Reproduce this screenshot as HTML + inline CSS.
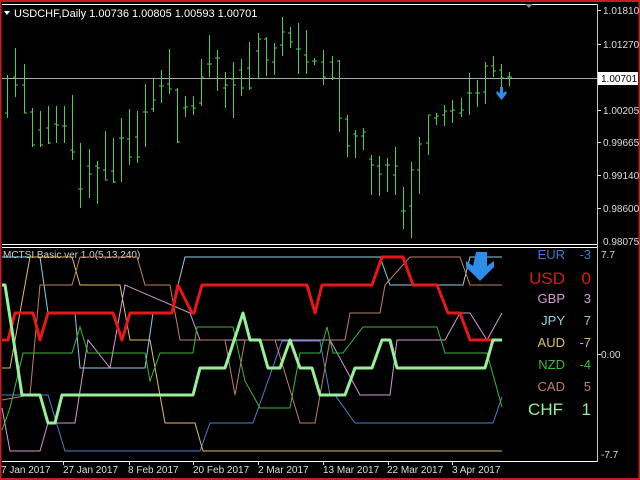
<!DOCTYPE html>
<html><head><meta charset="utf-8"><style>
html,body{margin:0;padding:0;background:#000;}
svg{display:block;}
text{font-family:"Liberation Sans",sans-serif;}
</style></head><body>
<svg width="640" height="480" viewBox="0 0 640 480" xmlns="http://www.w3.org/2000/svg">
<rect width="640" height="480" fill="#000"/>
<rect x="0.5" y="1" width="639" height="478" fill="none" stroke="#c02020" stroke-width="2"/>
<line x1="2" y1="4.5" x2="597" y2="4.5" stroke="#fff"/>
<line x1="2" y1="244.5" x2="597" y2="244.5" stroke="#fff"/>
<line x1="2" y1="247.5" x2="597" y2="247.5" stroke="#fff"/>
<line x1="2" y1="461.5" x2="597" y2="461.5" stroke="#fff"/>
<line x1="597.5" y1="4" x2="597.5" y2="462" stroke="#c8c8c8"/>
<line x1="2" y1="78.5" x2="597" y2="78.5" stroke="#a8a8a8"/>
<path d="M4 11 L10 11 L7 15 Z" fill="#fff"/>
<text x="14" y="17" font-size="11" fill="#fff">USDCHF,Daily  1.00736 1.00805 1.00593 1.00701</text>
<path d="M525 4 L533 4 L529 8 Z" fill="#888"/>
<g stroke="#4ed04e" stroke-width="1" fill="none">
<path d="M7.5 75V118M5 113h3M15.5 48V97M13 77h3M15 85h3M24.5 64V113M22 85h3M24 113h3M32.5 108V147M30 112h3M32 145h3M40.5 111V147M38 130h3M40 145h3M48.5 106V144M46 128h3M48 143h3M56.5 106V143M54 124h3M56 125h3M64.5 106V143M62 126h3M64 126h3M72.5 95V160M70 150h3M72 152h3M80.5 143V208M78 189h3M80 189h3M89.5 149V198M87 166h3M89 174h3M97.5 161V204M95 166h3M97 168h3M105.5 131V180M103 170h3M105 180h3M113.5 138V183M111 171h3M113 182h3M121.5 118V182M119 138h3M121 138h3M129.5 109V165M127 139h3M129 157h3M137.5 111V163M135 137h3M137 157h3M145.5 84V147M143 112h3M145 112h3M153.5 79V112M151 109h3M153 100h3M161.5 70V103M159 86h3M161 86h3M169.5 49V94M167 84h3M169 89h3M177.5 88V143M175 90h3M177 142h3M185.5 96V117M183 108h3M185 107h3M193.5 96V115M191 106h3M193 108h3M201.5 59V106M199 103h3M201 77h3M209.5 35V77M207 64h3M209 64h3M217.5 50V91M215 58h3M217 58h3M225.5 72V108M223 88h3M225 85h3M233.5 62V118M231 79h3M233 85h3M241.5 59V96M239 70h3M241 88h3M249.5 42V90M247 68h3M249 88h3M258.5 33V79M256 51h3M258 39h3M266.5 37V76M264 39h3M266 60h3M274.5 43V75M272 62h3M274 48h3M282.5 17V56M280 45h3M282 32h3M290.5 27V48M288 33h3M290 42h3M298.5 23V74M296 49h3M298 49h3M306.5 30V74M304 55h3M306 62h3M314.5 58V65M312 61h3M314 61h3M323.5 50V85M321 62h3M323 77h3M332.5 56V80M330 62h3M332 78h3M339.5 60V132M337 61h3M339 118h3M347.5 115V157M345 119h3M347 146h3M355.5 130V158M353 134h3M355 136h3M363.5 128V150M361 136h3M363 132h3M371.5 155V195M369 159h3M371 165h3M379.5 156V196M377 166h3M379 174h3M387.5 158V192M385 165h3M387 165h3M395.5 147V195M393 175h3M395 166h3M403.5 187V229M401 211h3M403 211h3M411.5 162V238M409 206h3M411 170h3M419.5 137V194M417 170h3M419 144h3M428.5 115V155M426 143h3M428 115h3M436.5 113V125M434 118h3M436 116h3M444.5 105V126M442 115h3M444 111h3M452.5 100V123M450 111h3M452 110h3M461.5 98V117M459 113h3M461 110h3M469.5 73V115M467 93h3M469 93h3M477.5 80V107M475 93h3M477 93h3M485.5 62V104M483 92h3M485 66h3M493.5 56V77M491 66h3M493 71h3M501.5 64V98M499 70h3M501 78h3M509.5 72V86M507 77h3M509 77h3"/>
</g>
<path d="M500 87h3v6l3.5 -2v3l-5 6l-5 -6v-3l3.5 2z" fill="#2e8de8"/>
<g font-size="10" fill="#ddd">
<text x="603" y="14">1.01810</text>
<text x="603" y="48">1.01270</text>
<text x="603" y="114">1.00205</text>
<text x="603" y="146">0.99665</text>
<text x="603" y="179">0.99140</text>
<text x="603" y="212">0.98600</text>
<text x="603" y="245">0.98075</text>
</g>
<rect x="598" y="72" width="40" height="13" fill="#fff"/>
<text x="601" y="82" font-size="10" fill="#000">1.00701</text>
<g stroke="#ddd"><line x1="597" y1="10.5" x2="601" y2="10.5"/><line x1="597" y1="44.5" x2="601" y2="44.5"/><line x1="597" y1="110.5" x2="601" y2="110.5"/><line x1="597" y1="142.5" x2="601" y2="142.5"/><line x1="597" y1="175.5" x2="601" y2="175.5"/><line x1="597" y1="208.5" x2="601" y2="208.5"/></g>
<g font-size="10" fill="#ddd">
<text x="601" y="258">7.7</text>
<text x="601" y="358">0.00</text>
<text x="601" y="458">-7.7</text>
</g>
<line x1="597" y1="354.5" x2="601" y2="354.5" stroke="#ddd"/>
<text x="3" y="258" font-size="10" fill="#ccc">MCTSI Basic ver 1.0(5,13,240)</text>
<g fill="none" stroke-width="1">
<polyline stroke="#4a82d0" points="2,395 12,395 40,395 48,395 65,451 200,451 210,423 253,423 263,395 282,341 320,341 330,395 335,395 355,423 493,423 502,397"/>
<polyline stroke="#8ecfe8" points="2,257 40,257 48,313 75,313 80,368 145,368 153,313 172,313 178,285 185,257 380,257 390,285 463,285 470,257 502,257"/>
<polyline stroke="#e0c060" points="2,368 10,368 30,257 72,257 80,285 120,285 130,340 150,340 165,423 195,423 203,451 502,451"/>
<polyline stroke="#d49ad4" points="2,408 10,451 40,451 48,423 75,423 88,340 110,368 125,285 190,313 200,340 320,340 330,340 360,395 390,395 397,340 445,340 460,313 470,313 487,340 502,313"/>
<polyline stroke="#3cb83c" points="2,430 10,408 23,353 72,353 80,327 88,353 145,353 150,381 160,353 193,353 197,327 233,327 245,381 260,408 290,408 300,353 320,353 327,327 333,353 343,353 363,327 437,327 445,353 487,353 502,407"/>
<polyline stroke="#c08060" points="2,400 30,395 40,285 47,285 72,285 80,257 137,257 145,285 170,285 180,340 225,340 235,395 245,340 275,340 300,423 315,423 330,340 345,340 350,313 380,313 385,285 410,257 460,257 470,285 502,285"/>
</g>
<polyline fill="none" stroke="#e81818" stroke-width="3" stroke-linejoin="round" points="2,340 8,340 15,313 33,313 40,340 48,313 113,313 122,340 130,313 172,313 178,285 192,313 194,313 202,285 307,285 315,313 322,285 372,285 382,257 403,257 413,285 437,285 448,313 460,313 470,340 502,340"/>
<polyline fill="none" stroke="#98f098" stroke-width="3" stroke-linejoin="round" points="2,285 5,285 22,395 40,395 48,423 55,423 62,395 193,395 200,368 225,368 243,313 250,340 260,340 268,368 280,368 290,340 300,368 312,368 320,395 345,395 355,368 372,368 382,340 390,340 397,368 485,368 493,340 502,340"/>
<path d="M476 252h11v14l7 -5v6l-14 14l-14 -14v-6l7 5z" fill="#2e8de8"/>
<g text-anchor="end">
<text x="565" y="259" font-size="13" fill="#3c7ad0">EUR</text><text x="591" y="259" font-size="13" fill="#3c7ad0">-3</text>
<text x="565" y="284" font-size="17" fill="#e01818">USD</text><text x="591" y="284" font-size="17" fill="#e01818">0</text>
<text x="565" y="303" font-size="13" fill="#d49ad4">GBP</text><text x="591" y="303" font-size="13" fill="#d49ad4">3</text>
<text x="565" y="325" font-size="13" fill="#8ecfe8">JPY</text><text x="591" y="325" font-size="13" fill="#8ecfe8">7</text>
<text x="565" y="347" font-size="13" fill="#e0c060">AUD</text><text x="591" y="347" font-size="13" fill="#e0c060">-7</text>
<text x="565" y="369" font-size="13" fill="#3cb83c">NZD</text><text x="591" y="369" font-size="13" fill="#3cb83c">-4</text>
<text x="565" y="391" font-size="13" fill="#c08060">CAD</text><text x="591" y="391" font-size="13" fill="#c08060">5</text>
<text x="563" y="415" font-size="17" fill="#98f098">CHF</text><text x="591" y="415" font-size="17" fill="#98f098">1</text>
</g>
<g stroke="#ddd"><line x1="63.5" y1="461" x2="63.5" y2="465"/><line x1="129.5" y1="461" x2="129.5" y2="465"/><line x1="193.5" y1="461" x2="193.5" y2="465"/><line x1="258.5" y1="461" x2="258.5" y2="465"/><line x1="323.5" y1="461" x2="323.5" y2="465"/><line x1="388.5" y1="461" x2="388.5" y2="465"/><line x1="452.5" y1="461" x2="452.5" y2="465"/></g>
<g font-size="10" fill="#ddd">
<text x="1" y="473">7 Jan 2017</text>
<text x="63" y="473">27 Jan 2017</text>
<text x="128" y="473">8 Feb 2017</text>
<text x="193" y="473">20 Feb 2017</text>
<text x="258" y="473">2 Mar 2017</text>
<text x="323" y="473">13 Mar 2017</text>
<text x="387" y="473">22 Mar 2017</text>
<text x="452" y="473">3 Apr 2017</text>
</g>
</svg>
</body></html>
